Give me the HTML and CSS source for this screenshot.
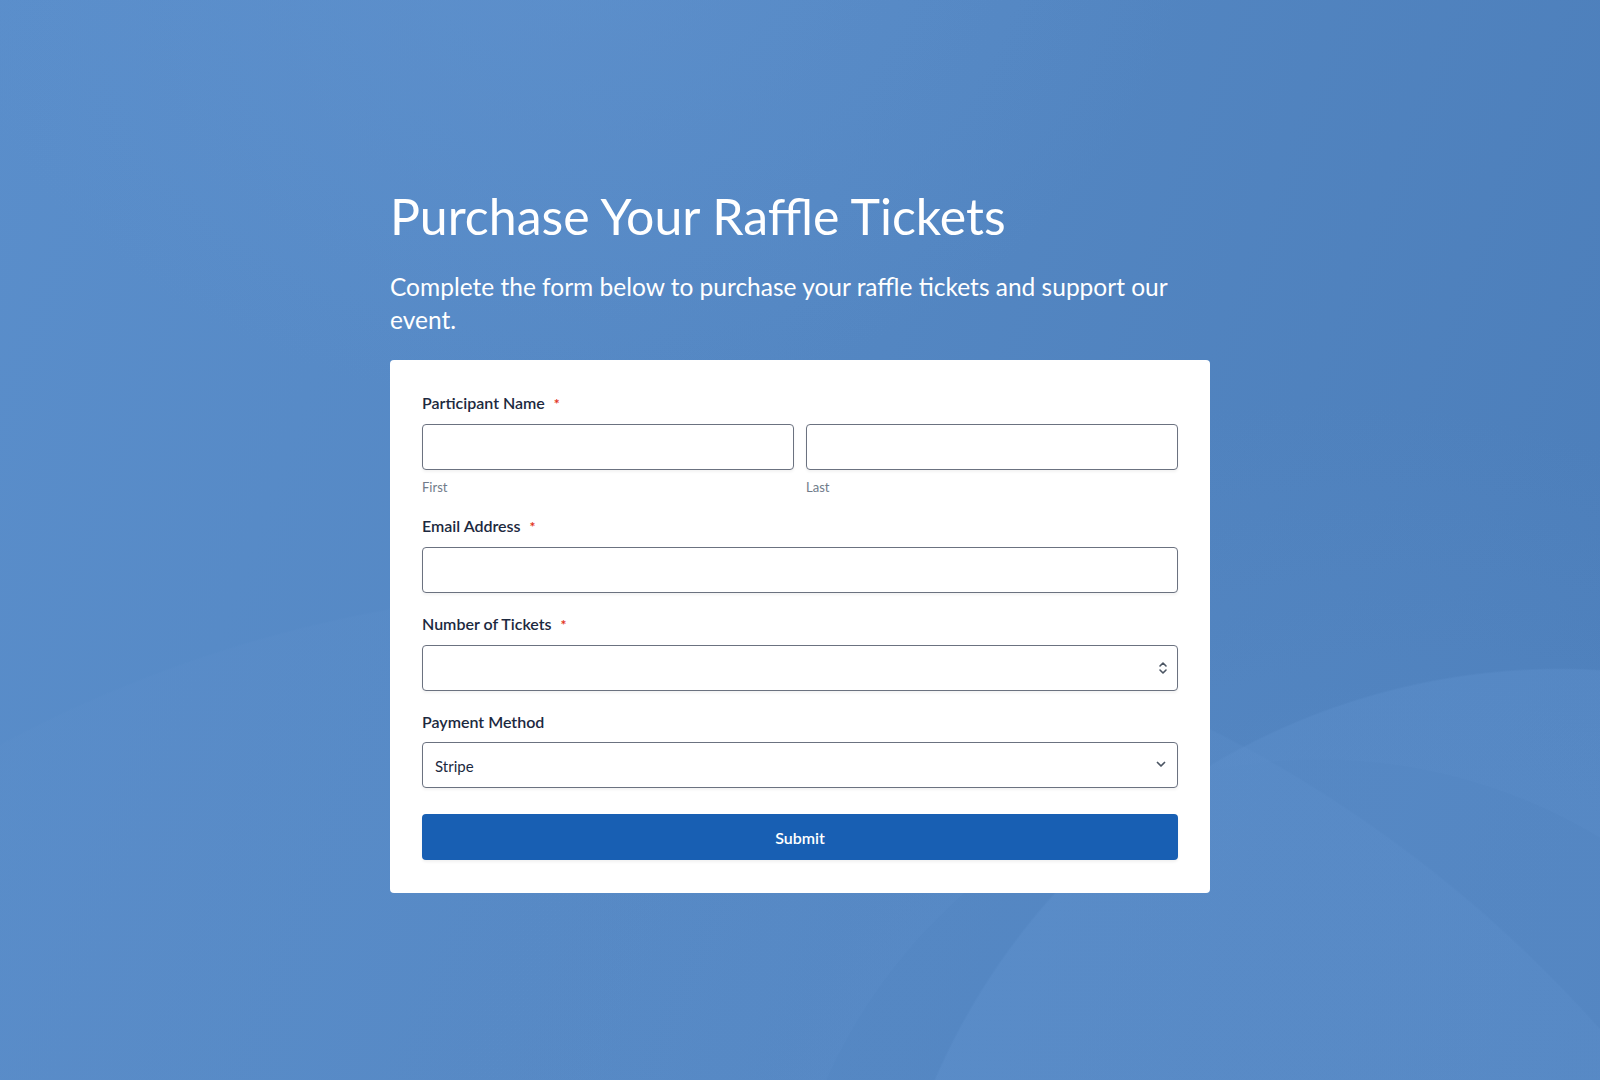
FILE: index.html
```html
<!DOCTYPE html>
<html lang="en">
<head>
<meta charset="utf-8">
<title>Purchase Your Raffle Tickets</title>
<link rel="stylesheet" href="styles.css">
</head>
<body>
<main class="page">
  <div class="wrap">
    <h1 class="title">Purchase Your Raffle Tickets</h1>
    <p class="subtitle">Complete the form below to purchase your raffle tickets and support our event.</p>
    <form class="card">
      <div class="field">
        <label class="label">Participant Name <span class="req">*</span></label>
        <div class="name-row">
          <div class="name-col">
            <input class="input" type="text">
            <span class="sublabel">First</span>
          </div>
          <div class="name-col">
            <input class="input" type="text">
            <span class="sublabel">Last</span>
          </div>
        </div>
      </div>
      <div class="field">
        <label class="label">Email Address <span class="req">*</span></label>
        <input class="input" type="email">
      </div>
      <div class="field">
        <label class="label">Number of Tickets <span class="req">*</span></label>
        <div class="input control">
          <span class="control-text"></span>
          <svg class="spin" width="10" height="14" viewBox="0 0 10 14" fill="none" stroke="#4b5563" stroke-width="1.6" stroke-linecap="round" stroke-linejoin="round"><path d="M2 5 L5 2 L8 5"/><path d="M2 9 L5 12 L8 9"/></svg>
        </div>
      </div>
      <div class="field field-last">
        <label class="label">Payment Method</label>
        <div class="input control">
          <span class="control-text">Stripe</span>
          <svg class="chev" width="10" height="7" viewBox="0 0 10 7" fill="none" stroke="#4b5563" stroke-width="1.7" stroke-linecap="round" stroke-linejoin="round"><path d="M1.5 1.5 L5 5 L8.5 1.5"/></svg>
        </div>
      </div>
      <button class="submit" type="button">Submit</button>
    </form>
  </div>
</main>
</body>
</html>
```

FILE: styles.css
```css
* { box-sizing: border-box; }

html, body {
  margin: 0;
  padding: 0;
}

body {
  min-height: 100vh;
  font-family: Lato, "Open Sans", "Liberation Sans", sans-serif;
  background-color: #5587c3;
  background-image:
    radial-gradient(ellipse 900px 700px at 560px -80px, rgba(100, 150, 210, 0.45), rgba(100, 150, 210, 0) 70%),
    radial-gradient(circle at 1320px 1300px, rgba(90, 140, 200, 0) 540px, rgba(90, 140, 200, 0.35) 541px, rgba(90, 140, 200, 0.0) 900px),
    radial-gradient(circle at 1560px 1350px, rgba(95, 145, 205, 0.45) 0, rgba(95, 145, 205, 0.45) 680px, rgba(95, 145, 205, 0) 682px),
    radial-gradient(circle at 620px 1900px, rgba(92, 142, 202, 0.35) 0, rgba(92, 142, 202, 0.35) 1310px, rgba(92, 142, 202, 0) 1312px),
    linear-gradient(110deg, #5a8ecb 0%, #5487c3 45%, #4b7db9 100%);
}

.page {
  min-height: 100vh;
}

.wrap {
  width: 820px;
  margin: 0 auto;
  padding-top: 186px;
  padding-bottom: 60px;
}

.title {
  margin: 0;
  font-size: 50px;
  line-height: 60px;
  font-weight: 400;
  color: #ffffff;
  letter-spacing: 0;
}

.subtitle {
  margin: 24px 0 0;
  font-size: 24.5px;
  line-height: 33px;
  font-weight: 400;
  color: #ffffff;
}

.card {
  margin-top: 24px;
  background: #ffffff;
  border-radius: 4px;
  padding: 32px 32px 33px;
  display: flex;
  flex-direction: column;
}

.field {
  display: flex;
  flex-direction: column;
  margin-bottom: 20px;
}

.field-last {
  margin-bottom: 21px;
}

.label {
  font-size: 16px;
  line-height: 22px;
  font-weight: 600;
  color: #1c2940;
  margin-bottom: 9px;
}

.req {
  color: #e2341d;
  font-size: 14px;
  margin-left: 5px;
  font-weight: 700;
}

.name-row {
  display: grid;
  grid-template-columns: 1fr 1fr;
  column-gap: 12px;
}

.name-col {
  display: flex;
  flex-direction: column;
}

.input {
  height: 46px;
  width: 100%;
  border: 1px solid #6b7280;
  border-radius: 4px;
  background: #ffffff;
  box-shadow: 0 2px 3px rgba(0, 0, 0, 0.05);
  font-family: inherit;
  font-size: 15px;
  padding: 0 12px;
  outline: none;
}

.control {
  display: flex;
  align-items: center;
  justify-content: space-between;
  padding: 0 12px 0 12px;
}

.control-text {
  font-size: 15px;
  color: #1c2940;
  padding-top: 2px;
}

.spin {
  margin-right: -3px;
}

.chev {
  margin-right: -1px;
  margin-top: -2px;
}

.sublabel {
  margin-top: 9px;
  font-size: 13px;
  line-height: 16px;
  color: #707b8a;
}

.submit {
  margin-top: 5px;
  height: 46px;
  border: none;
  border-radius: 4px;
  background: #185fb3;
  color: #ffffff;
  font-family: inherit;
  font-size: 16px;
  font-weight: 600;
  box-shadow: 0 2px 3px rgba(0, 0, 0, 0.06);
}
```
